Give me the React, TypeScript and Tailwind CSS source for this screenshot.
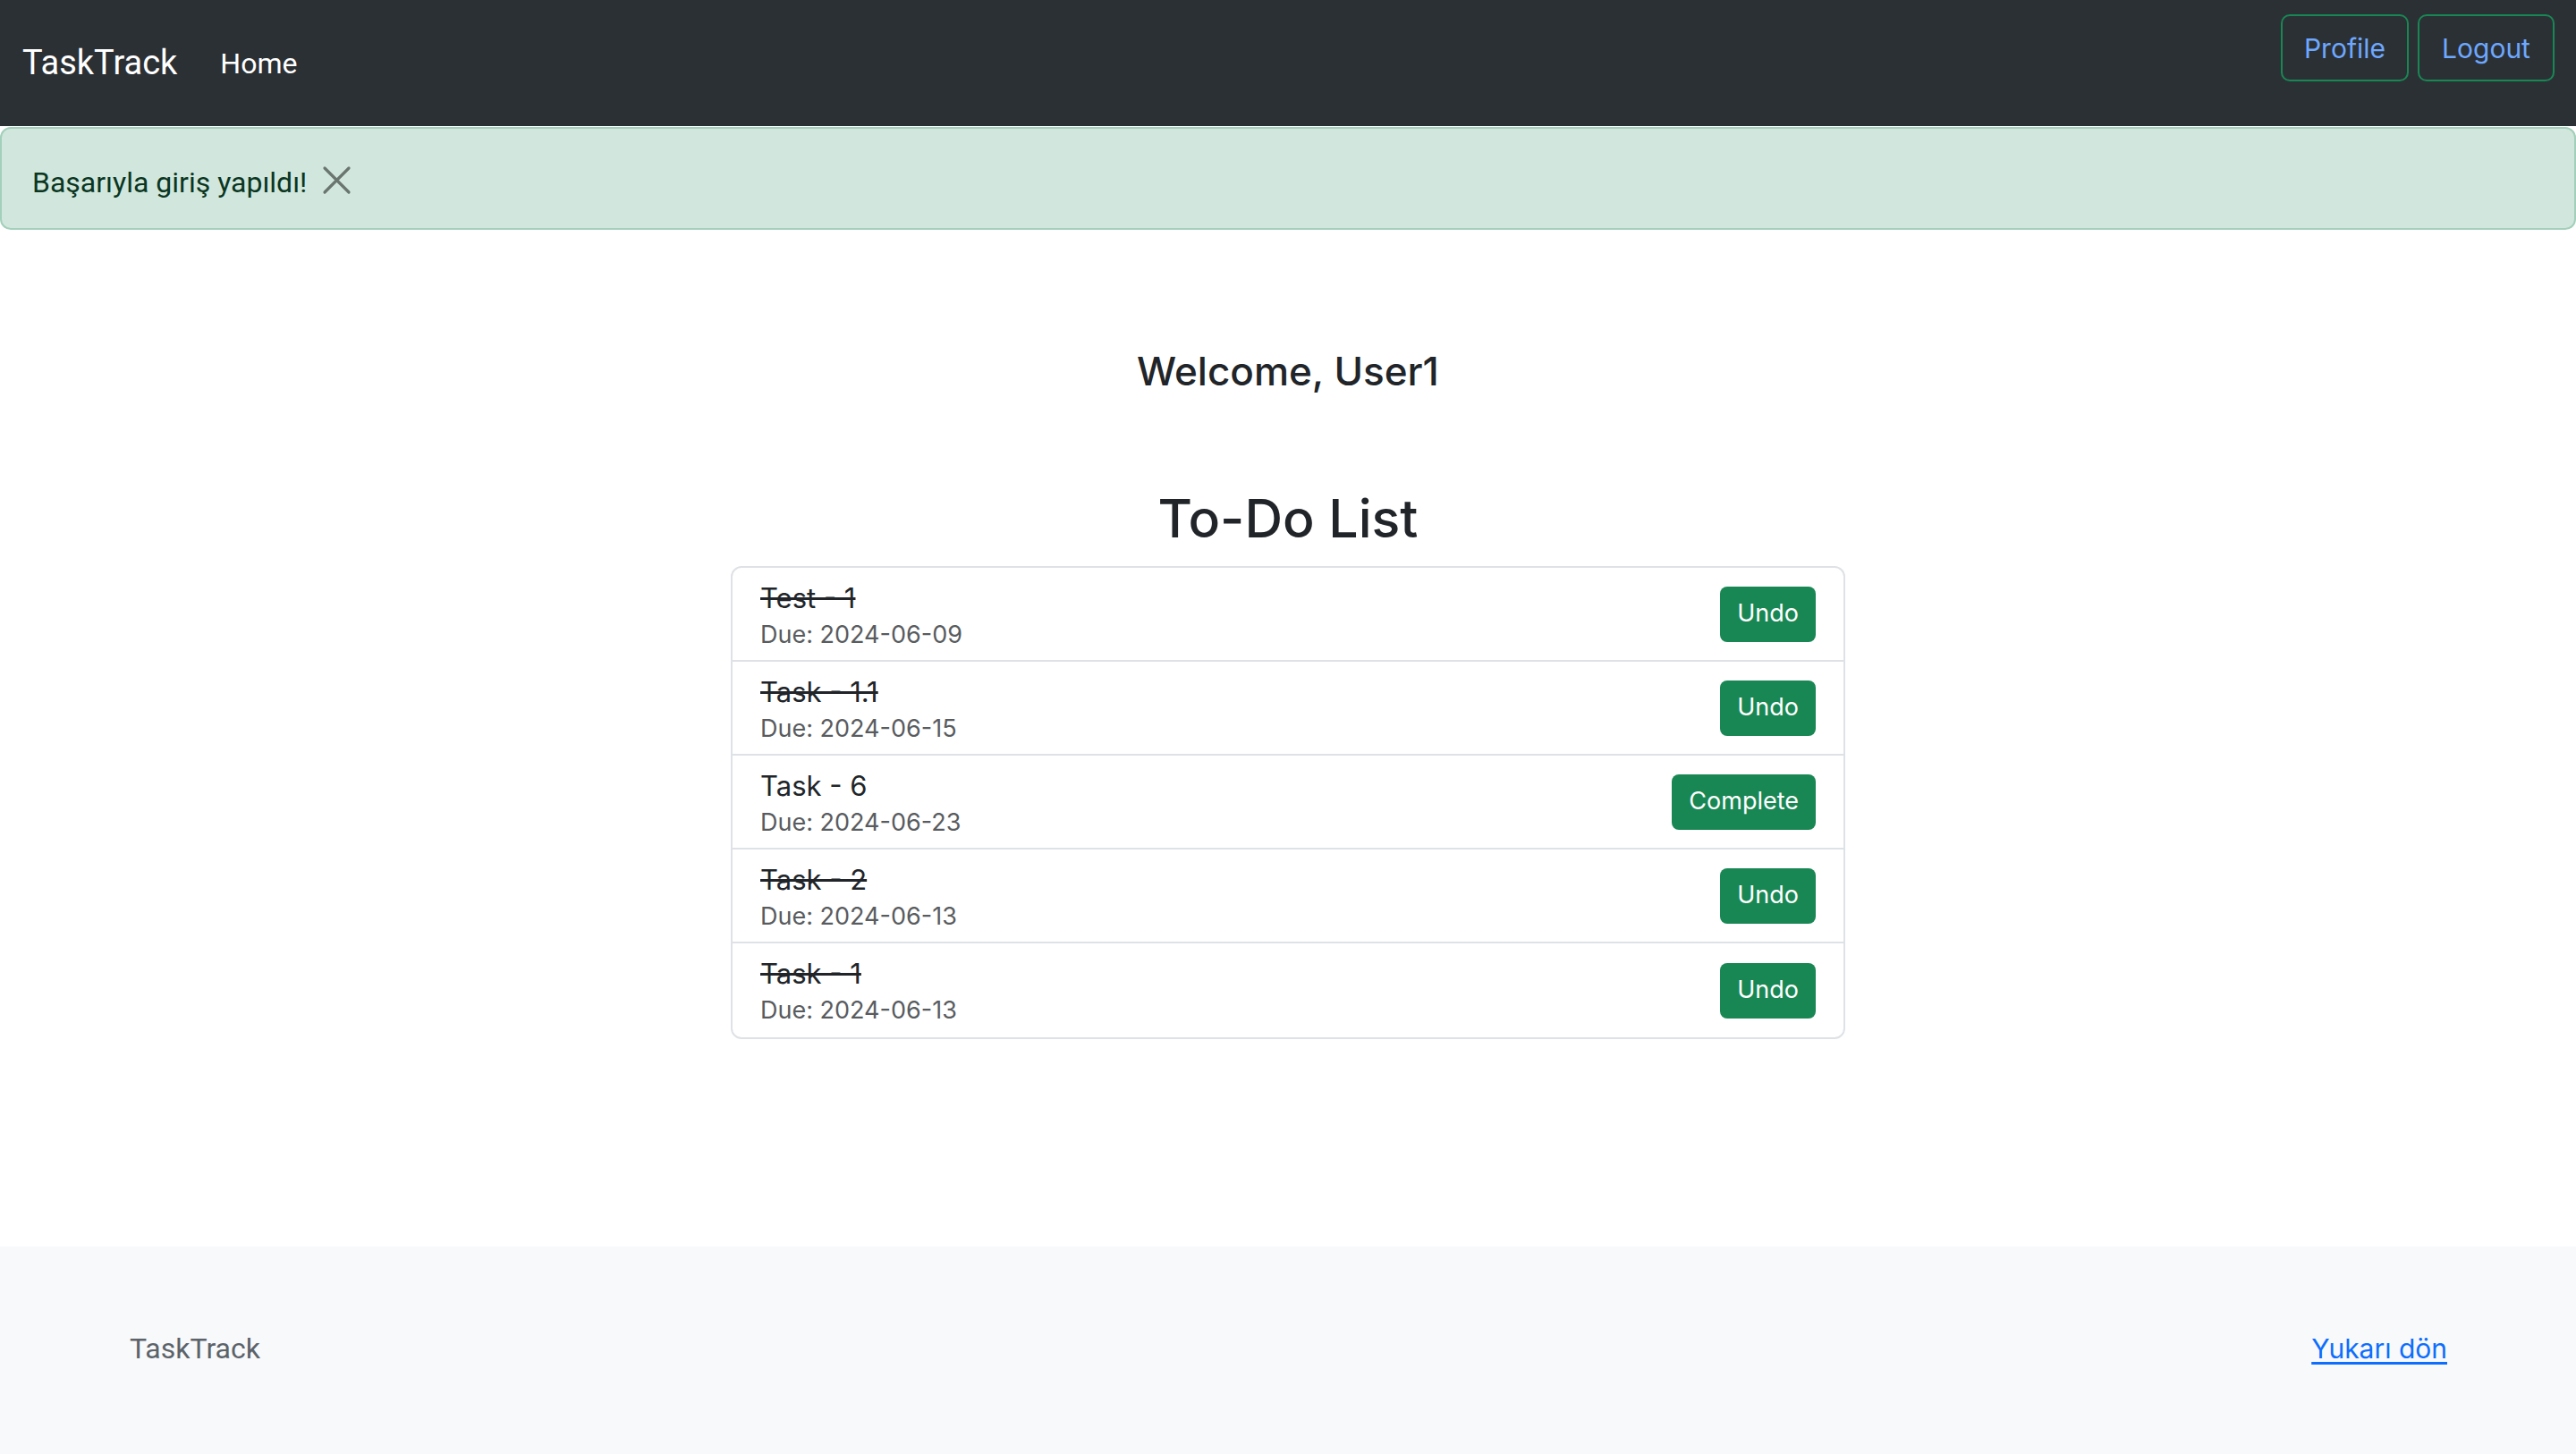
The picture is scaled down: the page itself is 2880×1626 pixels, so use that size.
import React from "react";

const tasks = [
  { title: "Test - 1", due: "2024-06-09", done: true },
  { title: "Task - 1.1", due: "2024-06-15", done: true },
  { title: "Task - 6", due: "2024-06-23", done: false },
  { title: "Task - 2", due: "2024-06-13", done: true },
  { title: "Task - 1", due: "2024-06-13", done: true },
];

const roboto = "font-['Roboto',_'Liberation_Sans',_sans-serif]";
const inter = "font-['Inter',_'Liberation_Sans',_sans-serif]";

export default function App() {
  return (
    <div className={`${inter} bg-white text-[#212529] w-full`}>
      {/* Navbar */}
      <nav className="h-[141px] bg-[#2b3035] flex items-start justify-between">
        <div className="h-full flex items-center pl-[25px] gap-[48px]">
          <span className={`${roboto} text-[38px] leading-[48px] text-white pb-[2px]`}>TaskTrack</span>
          <span className={`${roboto} text-[32px] leading-[48px] text-white`}>Home</span>
        </div>
        <div className="flex gap-[10px] pt-[16px] pr-[24px]">
          <button className="w-[143px] h-[75px] border-2 border-[#198754] rounded-[10px] text-[#6ea8fe] text-[30px] flex items-center justify-center pt-[2px]">
            Profile
          </button>
          <button className="w-[153px] h-[75px] border-2 border-[#198754] rounded-[10px] text-[#6ea8fe] text-[30px] flex items-center justify-center pt-[2px]">
            Logout
          </button>
        </div>
      </nav>

      {/* Alert */}
      <div className="mt-[1px] h-[115px] bg-[#d1e7dd] border-2 border-[#a3cfbb] rounded-[12px] flex items-start pl-[34px] pt-[36px]">
        <span className={`${roboto} text-[32px] leading-[48px] text-[#0a3622]`}>Başarıyla giriş yapıldı!</span>
        <svg className="ml-[17px] mt-[5px]" width="33" height="33" viewBox="0 0 33 33">
          <path d="M3 3 L30 30 M30 3 L3 30" stroke="#6a7570" strokeWidth="3.2" strokeLinecap="round" />
        </svg>
      </div>

      {/* Welcome */}
      <h4 className="mt-[131px] text-center text-[44px] leading-[54px] font-medium">Welcome, User1</h4>
      <h2 className="mt-[103px] text-center text-[59px] leading-[70px] font-medium">To-Do List</h2>

      {/* List */}
      <div className="mt-[18px] mx-auto w-[1246px] border-2 border-[#dee2e6] rounded-[12px] overflow-hidden">
        {tasks.map((t, i) => (
          <div
            key={i}
            className={`h-[105px] flex items-center justify-between px-[31px] ${
              i < tasks.length - 1 ? "border-b-2 border-[#dee2e6]" : ""
            }`}
          >
            <div className="self-start pt-[11px] flex flex-col">
              <span className={`text-[31px] leading-[45px] ${t.done ? "line-through" : ""}`}>{t.title}</span>
              <span className="text-[27px] leading-[38px] text-[#595c5f]">Due: {t.due}</span>
            </div>
            <button className="h-[62px] px-[19px] rounded-[8px] bg-[#198754] text-white text-[27px] flex items-center">
              {t.done ? "Undo" : "Complete"}
            </button>
          </div>
        ))}
      </div>

      {/* Footer */}
      <footer className="mt-[232px] h-[232px] bg-[#f8f9fa] flex items-start justify-between pl-[145px] pr-[144px] pt-[90px]">
        <span className={`${roboto} text-[32px] leading-[48px] text-[#5c636a]`}>TaskTrack</span>
        <a href="#" className="text-[30px] leading-[48px] text-[#0d6efd] underline underline-offset-[4px]">
          Yukarı dön
        </a>
      </footer>
    </div>
  );
}
